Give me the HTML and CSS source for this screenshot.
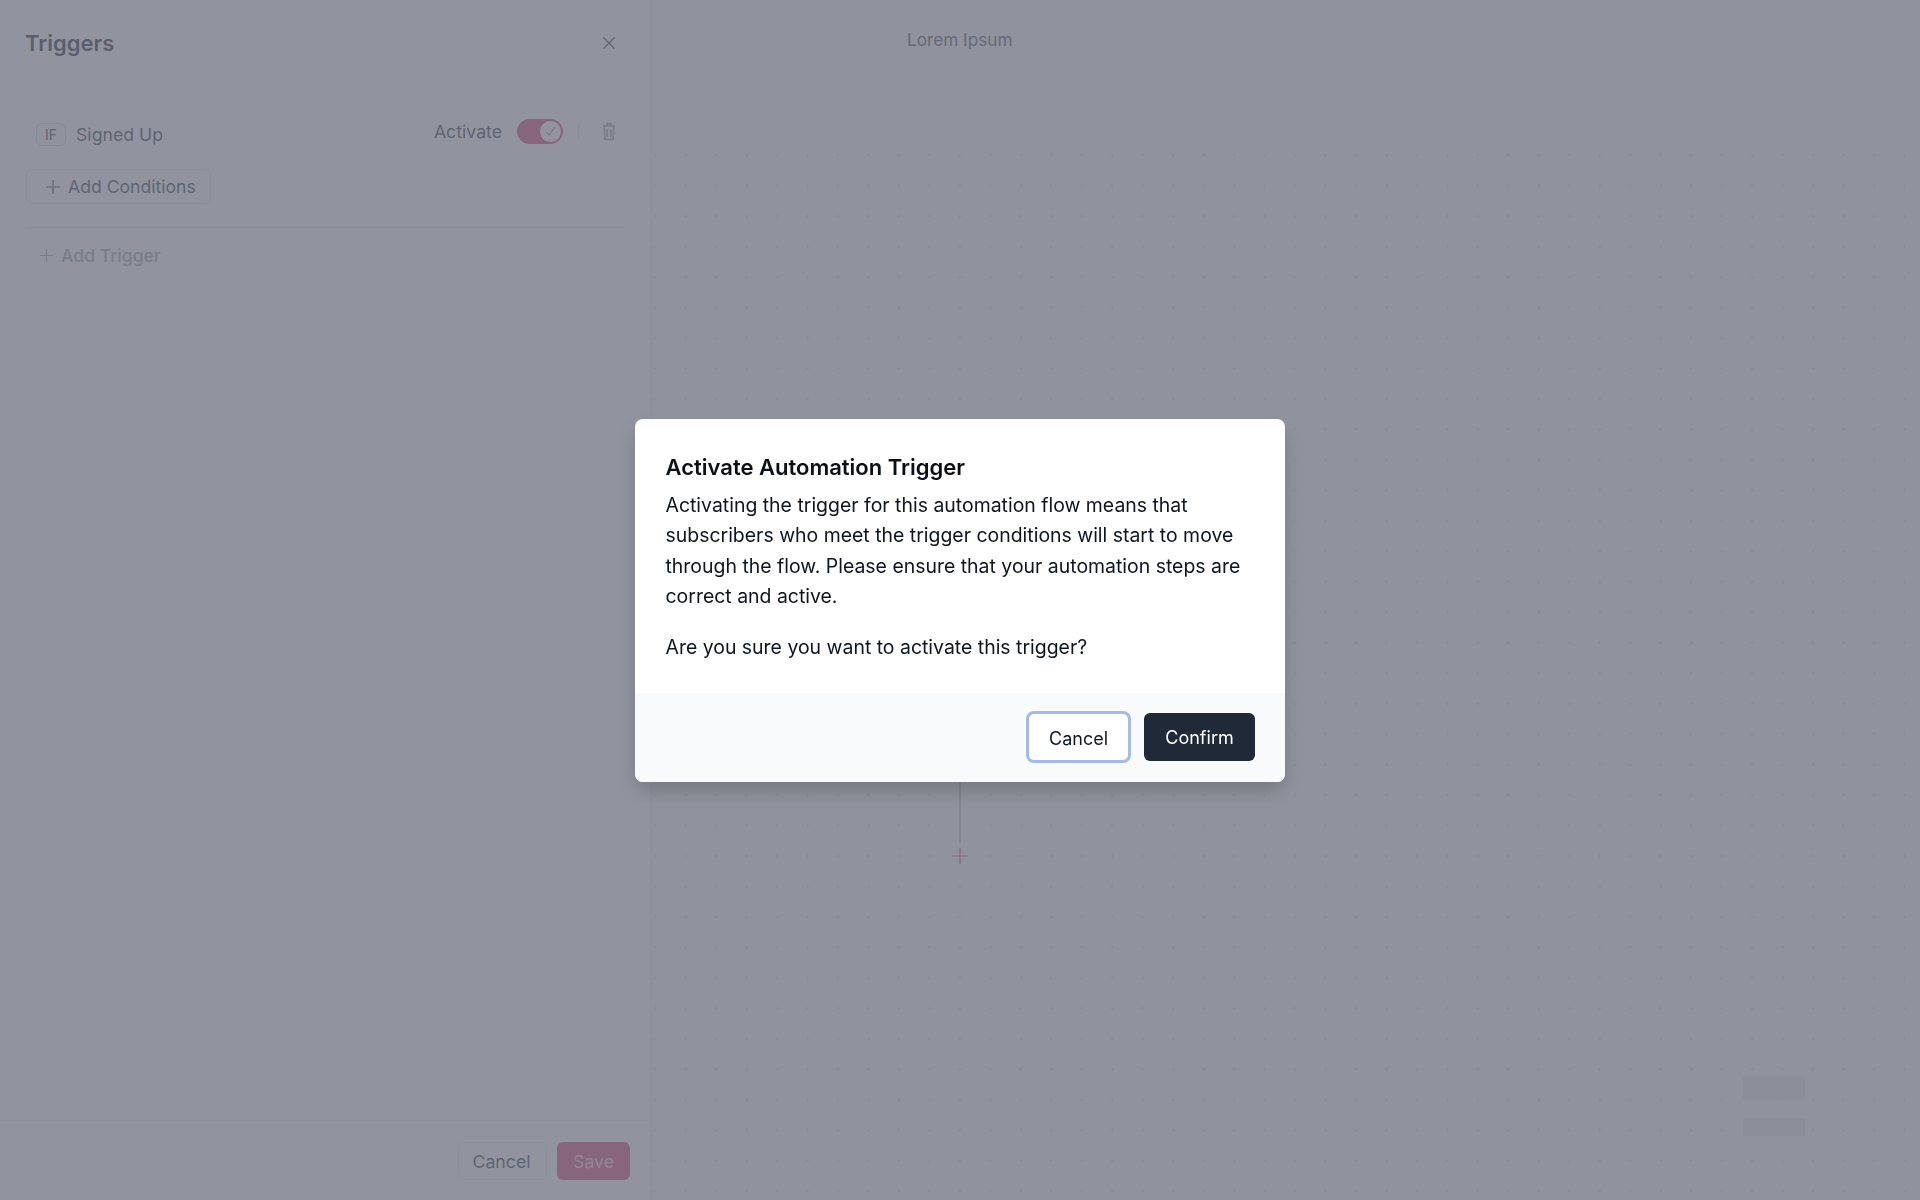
FILE: index.html
```html
<!DOCTYPE html>
<html lang="en">
<head>
<meta charset="utf-8">
<title>Triggers</title>
<link rel="stylesheet" href="styles.css">
</head>
<body>
<div class="app">
  <aside class="panel">
    <header class="panel-head">
      <h2 class="panel-title">Triggers</h2>
      <svg class="close-icon" viewBox="0 0 14 14" width="14" height="14"><path d="M1.5 1.5l11 11M12.5 1.5l-11 11"/></svg>
    </header>
    <div class="panel-body">
      <div class="trigger-row">
        <span class="if-badge">IF</span>
        <span class="trigger-name">Signed Up</span>
        <span class="activate-label">Activate</span>
        <span class="toggle"><span class="toggle-knob"><svg viewBox="0 0 14 14" width="13" height="13"><path d="M2.5 7.5l3 3.5 6-8.5"/></svg></span></span>
        <span class="row-sep"></span>
        <svg class="trash-icon" viewBox="0 0 14 19" width="14" height="19"><path d="M1 4h12M5 4V1.6h4V4M2.2 4l.7 13.4h8.2L11.8 4M5.2 7v8M8.8 7v8"/></svg>
      </div>
      <button class="add-conditions"><svg class="plus-icon" viewBox="0 0 14 14" width="14" height="14"><path d="M7 0v14M0 7h14"/></svg>Add Conditions</button>
      <div class="divider"></div>
      <button class="add-trigger"><svg class="plus-icon" viewBox="0 0 14 14" width="13" height="13"><path d="M7 0v14M0 7h14"/></svg>Add Trigger</button>
    </div>
    <footer class="panel-foot">
      <button class="btn-cancel">Cancel</button>
      <button class="btn-save">Save</button>
    </footer>
  </aside>
  <main class="canvas">
    <div class="canvas-head"></div>
    <div class="canvas-dots"></div>
    <span class="flow-title">Lorem Ipsum</span>
    <span class="flow-line"></span>
    <svg class="flow-plus" viewBox="0 0 16 16" width="16" height="16"><path d="M8 0v16M0 8h16"/></svg>
    <span class="skeleton skeleton-a"></span>
    <span class="skeleton skeleton-b"></span>
  </main>
</div>
<div class="overlay">
  <section class="modal">
    <div class="modal-body">
      <h3 class="modal-title">Activate Automation Trigger</h3>
      <p class="modal-text">Activating the trigger for this automation flow means that subscribers who meet the trigger conditions will start to move through the flow. Please ensure that your automation steps are correct and active.</p>
      <p class="modal-text modal-question">Are you sure you want to activate this trigger?</p>
    </div>
    <div class="modal-foot">
      <button class="modal-cancel">Cancel</button>
      <button class="modal-confirm">Confirm</button>
    </div>
  </section>
</div>
</body>
</html>
```
FILE: styles.css
```css
* { box-sizing: border-box; }
html, body { margin: 0; height: 100%; }
body { font-family: Inter, "Liberation Sans", sans-serif; color: #1f2937; background: #fff; overflow: hidden; }
button { font-family: inherit; cursor: pointer; }
.app { display: flex; height: 1200px; }

.panel { width: 652px; height: 100%; display: flex; flex-direction: column; border-right: 2px solid #f1f3f5; background: #fff; }
.panel-head { height: 86px; display: flex; align-items: center; justify-content: space-between; padding: 0 34px 0 25px; }
.panel-title { margin: 0; font-size: 22px; font-weight: 600; color: #1f2937; }
.close-icon { fill: none; stroke: #374151; stroke-width: 1.2; }
.panel-body { flex: 1; padding: 30px 26px 0; }
.trigger-row { display: flex; align-items: center; height: 30px; padding: 0 8px 0 10px; }
.if-badge { width: 30px; height: 23px; margin-top: 6px; display: flex; align-items: center; justify-content: center; border: 1px solid #d1d5db; border-radius: 6px; background: #f9fafb; font-size: 14px; color: #374151; }
.trigger-name { margin: 6px 0 0 10px; font-size: 17.7px; color: #374151; }
.activate-label { margin-left: auto; margin-right: 1px; font-size: 17.7px; color: #374151; }
.toggle { width: 46px; height: 25px; margin-left: 14px; padding: 2px; display: flex; justify-content: flex-end; border-radius: 13px; background: #d8477c; }
.toggle-knob { width: 21px; height: 21px; display: flex; align-items: center; justify-content: center; border-radius: 50%; background: #fff; }
.toggle-knob svg { fill: none; stroke: #d8477c; stroke-width: 1; }
.row-sep { width: 1px; height: 16px; margin-left: 15px; background: #e5e7eb; }
.trash-icon { margin-left: 23px; fill: none; stroke: #9ca3af; stroke-width: 1.6; }
.add-conditions { display: flex; align-items: center; gap: 8px; width: 185px; height: 35px; margin-top: 23px; padding: 0 0 0 19px; border: 1px solid #e5e7eb; border-radius: 6px; background: #fff; font-size: 17.6px; color: #374151; }
.plus-icon { fill: none; stroke: currentColor; stroke-width: 1.2; flex: none; }
.divider { height: 1px; margin: 23px 0 0 2px; width: 596px; background: #e5e7eb; }
.add-trigger { display: flex; align-items: center; gap: 8px; margin: 16px 0 0 14px; padding: 0; height: 22px; border: 0; background: none; font-size: 17.6px; font-weight: 500; color: #9ca3af; }
.panel-foot { height: 80px; display: flex; align-items: flex-start; justify-content: flex-end; gap: 10px; padding: 21px 20px 0 0; border-top: 1px solid #eceef1; }
.btn-cancel { width: 89px; height: 38px; padding: 0 2px 0 0; border: 1px solid #eceef1; border-radius: 6px; background: #fff; font-size: 17.7px; color: #374151; }
.btn-save { width: 73px; height: 38px; border: 0; border-radius: 6px; background: #d8477c; font-size: 17.7px; color: #f9c7da; }

.canvas { flex: 1; position: relative; background: #f8f9fa; }
.canvas-head { height: 78px; background: #fafafb; }
.canvas-dots { position: absolute; inset: 140px 0 0 0; background-image: radial-gradient(circle, #dcdee3 1px, transparent 1.2px); background-size: 30.48px 30.48px; background-position: -12px 0; }
.flow-title { position: absolute; left: 255px; top: 29px; font-size: 17.2px; line-height: 22px; color: #4b5563; }
.flow-line { position: absolute; left: 307px; top: 781px; width: 2px; height: 62px; background: #c7cbd1; }
.flow-plus { position: absolute; left: 300px; top: 848px; fill: none; stroke: #d8477c; stroke-width: 1.2; }
.skeleton { position: absolute; left: 1091px; width: 62px; background: #ebebed; }
.skeleton-a { top: 1076px; height: 24px; }
.skeleton-b { top: 1118px; height: 18px; }

.overlay { position: fixed; inset: 0; display: flex; align-items: center; justify-content: center; background: rgba(108, 112, 126, .75); }
.modal { width: 650px; height: 363px; display: flex; flex-direction: column; border-radius: 8px; overflow: hidden; background: #fff; box-shadow: 0 10px 20px -3px rgba(0, 0, 0, .22); }
.modal-body { flex: 1; padding: 34px 30px 0 30.5px; }
.modal-title { margin: 0; font-size: 22px; line-height: 28px; font-weight: 600; color: #0b0f17; }
.modal-text { margin: 9px 0 0; font-size: 19.45px; line-height: 30.5px; color: #0f1520; }
.modal-question { margin-top: 20.5px; }
.modal-foot { height: 89px; display: flex; align-items: center; justify-content: flex-end; gap: 13px; padding: 0 30px 0 0; background: #f9fafb; }
.modal-cancel { width: 105px; height: 52px; padding: 2px 0 0; border: 3px solid #a5b9ea; border-radius: 8px; background: #fff; font-size: 18px; color: #111827; }
.modal-confirm { width: 111px; height: 48px; padding: 1px 0 0; border: 0; border-radius: 6px; background: #1f2937; font-size: 18px; color: #fff; }
```
